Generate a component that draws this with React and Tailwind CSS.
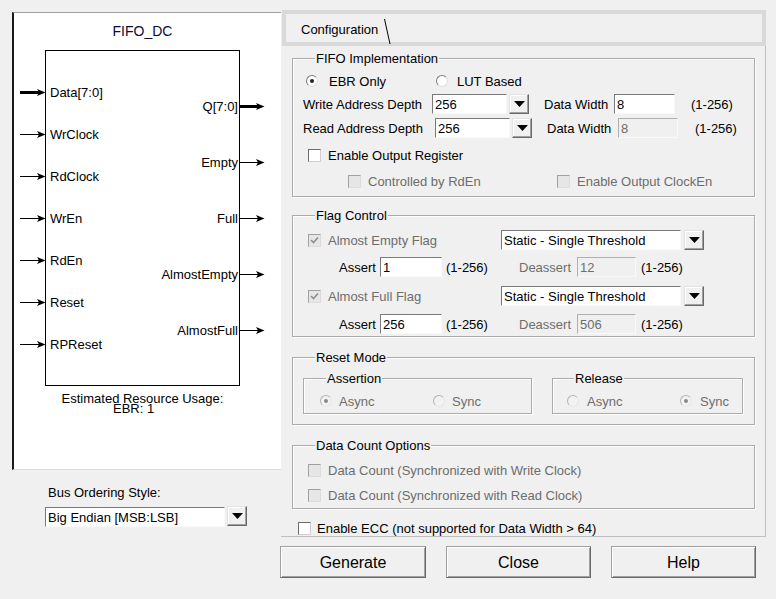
import React from "react";

const GRAY = "text-[#6d6d6d]";

function Arrow({ thick }) {
  return (
    <svg width="26" height="9" viewBox="0 0 26 9" className="block">
      <line x1="0" y1="4.5" x2="20" y2="4.5" stroke="#000" strokeWidth={thick ? 3 : 1} />
      <polygon points="17,1 25.5,4.5 17,8 19,4.5" fill="#000" />
    </svg>
  );
}

function Check({ checked, disabled }) {
  return (
    <span
      className={
        disabled
          ? "w-[13px] h-[13px] shrink-0 flex items-center justify-center border border-t-[#a0a0a0] border-l-[#a0a0a0] border-r-[#dcdcdc] border-b-[#dcdcdc] bg-[#e6e6e6]"
          : "w-[13px] h-[13px] shrink-0 flex items-center justify-center border border-t-[#6d6d6d] border-l-[#6d6d6d] border-r-[#d0d0d0] border-b-[#d0d0d0] bg-white"
      }
    >
      {checked && (
        <svg width="9" height="9" viewBox="0 0 9 9">
          <polyline points="1,4 3.5,6.5 8,1.5" fill="none" stroke={disabled ? "#8d8d8d" : "#000"} strokeWidth="1.6" />
        </svg>
      )}
    </span>
  );
}

function Radio({ checked, disabled }) {
  return (
    <span
      className={
        disabled
          ? "w-[12px] h-[12px] shrink-0 rounded-full flex items-center justify-center border border-t-[#b4b4b4] border-l-[#b4b4b4] border-r-[#e6e6e6] border-b-[#e6e6e6] bg-[#f2f2f2]"
          : "w-[12px] h-[12px] shrink-0 rounded-full flex items-center justify-center border border-t-[#7a7a7a] border-l-[#7a7a7a] border-r-[#dedede] border-b-[#dedede] bg-white"
      }
    >
      {checked && (
        <span className={disabled ? "w-[4px] h-[4px] rounded-full bg-[#8a8a8a]" : "w-[4px] h-[4px] rounded-full bg-[#222]"} />
      )}
    </span>
  );
}

function Field({ cls, value, disabled }) {
  return (
    <div
      className={
        (disabled
          ? "bg-[#f0f0f0] text-[#6d6d6d] border-t-[#b0b0b0] border-l-[#b0b0b0] "
          : "bg-white border-t-[#7a7a7a] border-l-[#7a7a7a] ") +
        "h-[20px] shrink-0 flex items-center pl-[2px] border border-r-[#fafafa] border-b-[#fafafa] " +
        cls
      }
    >
      {value}
    </div>
  );
}

function Drop({ cls }) {
  return (
    <div
      className={
        "h-[20px] w-[20px] shrink-0 flex items-center justify-center bg-[#f0f0f0] border border-t-[#e3e3e3] border-l-[#e3e3e3] border-r-[#696969] border-b-[#696969] shadow-[inset_-1px_-1px_0_#a0a0a0,inset_1px_1px_0_#ffffff] " +
        cls
      }
    >
      <svg width="11" height="6" viewBox="0 0 11 6">
        <polygon points="0,0 11,0 5.5,6" fill="#000" />
      </svg>
    </div>
  );
}

function Group({ title, cls, legendCls, children }) {
  return (
    <div className={"relative shrink-0 border border-[#ababab] shadow-[inset_1px_1px_0_#ffffff,1px_1px_0_#ffffff] " + cls}>
      <span className={"absolute top-[-8px] bg-[#f0f0f0] px-[1px] leading-[15px] " + legendCls}>{title}</span>
      {children}
    </div>
  );
}

function Btn({ cls, children }) {
  return (
    <div
      className={
        "h-[32px] shrink-0 flex items-center justify-center text-[16px] bg-[#f0f0f0] border border-t-[#a0a0a0] border-l-[#a0a0a0] border-r-[#696969] border-b-[#696969] shadow-[inset_1px_1px_0_#ffffff,inset_-1px_-1px_0_#a0a0a0] " +
        cls
      }
    >
      {children}
    </div>
  );
}

const inputs = [
  { name: "Data[7:0]", lt: "top-[34px]", at: "top-[37px]", thick: true },
  { name: "WrClock", lt: "top-[76px]", at: "top-[79px]" },
  { name: "RdClock", lt: "top-[118px]", at: "top-[121px]" },
  { name: "WrEn", lt: "top-[160px]", at: "top-[163px]" },
  { name: "RdEn", lt: "top-[202px]", at: "top-[205px]" },
  { name: "Reset", lt: "top-[244px]", at: "top-[247px]" },
  { name: "RPReset", lt: "top-[286px]", at: "top-[289px]" },
];

const outputs = [
  { name: "Q[7:0]", lt: "top-[48px]", at: "top-[51px]", thick: true },
  { name: "Empty", lt: "top-[104px]", at: "top-[107px]" },
  { name: "Full", lt: "top-[160px]", at: "top-[163px]" },
  { name: "AlmostEmpty", lt: "top-[216px]", at: "top-[219px]" },
  { name: "AlmostFull", lt: "top-[272px]", at: "top-[275px]" },
];

export default function App() {
  return (
    <div className="w-[776px] h-[599px] overflow-hidden bg-[#f0f0f0] flex font-['Liberation_Sans',Arial,sans-serif] text-[13px] leading-[15px] text-black">
      {/* Left column */}
      <div className="w-[281px] shrink-0 pt-[12px] pl-[12px] flex flex-col">
        <div className="w-[269px] h-[458px] bg-white border-t border-t-[#a0a0a0] border-l-2 border-l-[#1a1a1a] border-b border-b-[#dcdcdc] flex flex-col">
          <div className="mt-[10px] ml-[31px] w-[195px] text-center text-[14px] leading-[16px] text-[#0b0b3b]">FIFO_DC</div>
          <div className="relative mt-[11px] ml-[31px] w-[195px] h-[336px] border border-black">
            {inputs.map((p) => (
              <React.Fragment key={p.name}>
                <div className={"absolute left-[-26px] " + p.at}>
                  <Arrow thick={p.thick} />
                </div>
                <div className={"absolute left-[4px] whitespace-nowrap " + p.lt}>{p.name}</div>
              </React.Fragment>
            ))}
            {outputs.map((p) => (
              <React.Fragment key={p.name}>
                <div className={"absolute left-[193px] " + p.at}>
                  <Arrow thick={p.thick} />
                </div>
                <div className={"absolute right-[1px] whitespace-nowrap text-right " + p.lt}>{p.name}</div>
              </React.Fragment>
            ))}
          </div>
          <div className="mt-[8px] ml-[31px] w-[195px] text-center leading-[10px]">Estimated Resource Usage:</div>
          <div className="ml-[99px] leading-[10px]">EBR: 1</div>
        </div>
        <div className="mt-[15px] ml-[36px]">Bus Ordering Style:</div>
        <div className="mt-[7px] ml-[33px] flex">
          <Field cls="w-[180px]" value="Big Endian [MSB:LSB]" />
          <Drop cls="ml-[2px] -mt-[1px]" />
        </div>
      </div>

      {/* Right column */}
      <div className="w-[495px] shrink-0 pt-[10px] flex flex-col">
        <div className="ml-[1px] w-[484px] h-[36px] shrink-0 border-4 border-[#d9d9d9] bg-[#f0f0f0] flex items-start pl-[15px]">
          <span className="mt-[8px]">Configuration</span>
          <svg width="7" height="25" viewBox="0 0 7 25" className="mt-[5px] ml-[6px] shrink-0">
            <line x1="0.5" y1="0" x2="6" y2="25" stroke="#000" strokeWidth="1" />
          </svg>
        </div>

        <div className="w-[485px] h-[491px] shrink-0 border-r border-b border-[#bfbfbf] flex flex-col">
          {/* FIFO Implementation */}
          <Group title="FIFO Implementation" cls="mt-[12px] ml-[11px] w-[463px] h-[139px] flex flex-col" legendCls="left-[22px]">
            <div className="mt-[12px] h-[20px] flex items-center">
              <div className="ml-[13px] w-[130px] flex items-center">
                <Radio checked />
                <span className="ml-[11px]">EBR Only</span>
              </div>
              <Radio />
              <span className="ml-[9px]">LUT Based</span>
            </div>
            <div className="mt-[3px] h-[20px] flex items-center">
              <span className="ml-[10px] w-[129px] shrink-0">Write Address Depth</span>
              <Field cls="w-[75px]" value="256" />
              <Drop cls="ml-[2px]" />
              <span className="ml-[15px] w-[70px] shrink-0">Data Width</span>
              <Field cls="w-[61px]" value="8" />
              <span className="ml-[16px]">(1-256)</span>
            </div>
            <div className="mt-[4px] h-[20px] flex items-center">
              <span className="ml-[10px] w-[132px] shrink-0">Read Address Depth</span>
              <Field cls="w-[75px]" value="256" />
              <Drop cls="ml-[2px]" />
              <span className="ml-[15px] w-[71px] shrink-0">Data Width</span>
              <Field cls="w-[60px]" value="8" disabled />
              <span className="ml-[17px]">(1-256)</span>
            </div>
            <div className="mt-[7px] h-[20px] flex items-center">
              <span className="ml-[15px] flex items-center">
                <Check />
              </span>
              <span className="ml-[7px]">Enable Output Register</span>
            </div>
            <div className="mt-[6px] h-[20px] flex items-center">
              <div className="ml-[55px] w-[209px] shrink-0 flex items-center">
                <Check disabled />
                <span className={"ml-[7px] " + GRAY}>Controlled by RdEn</span>
              </div>
              <Check disabled />
              <span className={"ml-[7px] " + GRAY}>Enable Output ClockEn</span>
            </div>
          </Group>

          {/* Flag Control */}
          <Group title="Flag Control" cls="mt-[18px] ml-[11px] w-[463px] h-[122px] flex flex-col" legendCls="left-[22px]">
            <div className="mt-[14px] h-[20px] flex items-center">
              <div className="ml-[15px] w-[193px] shrink-0 flex items-center">
                <Check checked disabled />
                <span className={"ml-[7px] " + GRAY}>Almost Empty Flag</span>
              </div>
              <Field cls="w-[180px]" value="Static - Single Threshold" />
              <Drop cls="ml-[3px] -mt-[1px]" />
            </div>
            <div className="mt-[7px] h-[20px] flex items-center">
              <span className="ml-[46px] w-[41px] shrink-0">Assert</span>
              <Field cls="w-[62px]" value="1" />
              <span className="ml-[4px] w-[73px] shrink-0">(1-256)</span>
              <span className={"w-[58px] shrink-0 " + GRAY}>Deassert</span>
              <Field cls="w-[59px]" value="12" disabled />
              <span className="ml-[5px]">(1-256)</span>
            </div>
            <div className="mt-[9px] h-[20px] flex items-center">
              <div className="ml-[15px] w-[193px] shrink-0 flex items-center">
                <Check checked disabled />
                <span className={"ml-[7px] " + GRAY}>Almost Full Flag</span>
              </div>
              <Field cls="w-[180px]" value="Static - Single Threshold" />
              <Drop cls="ml-[3px] -mt-[1px]" />
            </div>
            <div className="mt-[8px] h-[20px] flex items-center">
              <span className="ml-[46px] w-[41px] shrink-0">Assert</span>
              <Field cls="w-[62px]" value="256" />
              <span className="ml-[4px] w-[73px] shrink-0">(1-256)</span>
              <span className={"w-[58px] shrink-0 " + GRAY}>Deassert</span>
              <Field cls="w-[59px]" value="506" disabled />
              <span className="ml-[5px]">(1-256)</span>
            </div>
          </Group>

          {/* Reset Mode */}
          <Group title="Reset Mode" cls="mt-[20px] ml-[11px] w-[463px] h-[68px] flex items-start" legendCls="left-[22px]">
            <Group title="Assertion" cls="mt-[20px] ml-[10px] w-[229px] h-[36px] flex items-start" legendCls="left-[22px]">
              <div className="mt-[12px] h-[20px] flex items-center">
                <div className="ml-[16px] w-[113px] shrink-0 flex items-center">
                  <Radio checked disabled />
                  <span className={"ml-[7px] " + GRAY}>Async</span>
                </div>
                <Radio disabled />
                <span className={"ml-[7px] " + GRAY}>Sync</span>
              </div>
            </Group>
            <Group title="Release" cls="mt-[20px] ml-[20px] w-[191px] h-[36px] flex items-start" legendCls="left-[21px]">
              <div className="mt-[12px] h-[20px] flex items-center">
                <div className="ml-[14px] w-[113px] shrink-0 flex items-center">
                  <Radio disabled />
                  <span className={"ml-[8px] " + GRAY}>Async</span>
                </div>
                <Radio checked disabled />
                <span className={"ml-[8px] " + GRAY}>Sync</span>
              </div>
            </Group>
          </Group>

          {/* Data Count Options */}
          <Group title="Data Count Options" cls="mt-[20px] ml-[11px] w-[463px] h-[64px] flex flex-col" legendCls="left-[22px]">
            <div className="mt-[14px] h-[20px] flex items-center">
              <span className="ml-[15px] flex items-center">
                <Check disabled />
              </span>
              <span className={"ml-[7px] " + GRAY}>Data Count (Synchronized with Write Clock)</span>
            </div>
            <div className="mt-[5px] h-[20px] flex items-center">
              <span className="ml-[15px] flex items-center">
                <Check disabled />
              </span>
              <span className={"ml-[7px] " + GRAY}>Data Count (Synchronized with Read Clock)</span>
            </div>
          </Group>

          <div className="mt-[11px] h-[16px] flex items-center">
            <span className="ml-[17px] flex items-center">
              <Check />
            </span>
            <span className="ml-[6px]">Enable ECC (not supported for Data Width &gt; 64)</span>
          </div>
        </div>

        <div className="mt-[9px] -ml-[1px] flex">
          <Btn cls="w-[146px]">Generate</Btn>
          <Btn cls="ml-[20px] w-[145px]">Close</Btn>
          <Btn cls="ml-[20px] w-[145px]">Help</Btn>
        </div>
      </div>
    </div>
  );
}
